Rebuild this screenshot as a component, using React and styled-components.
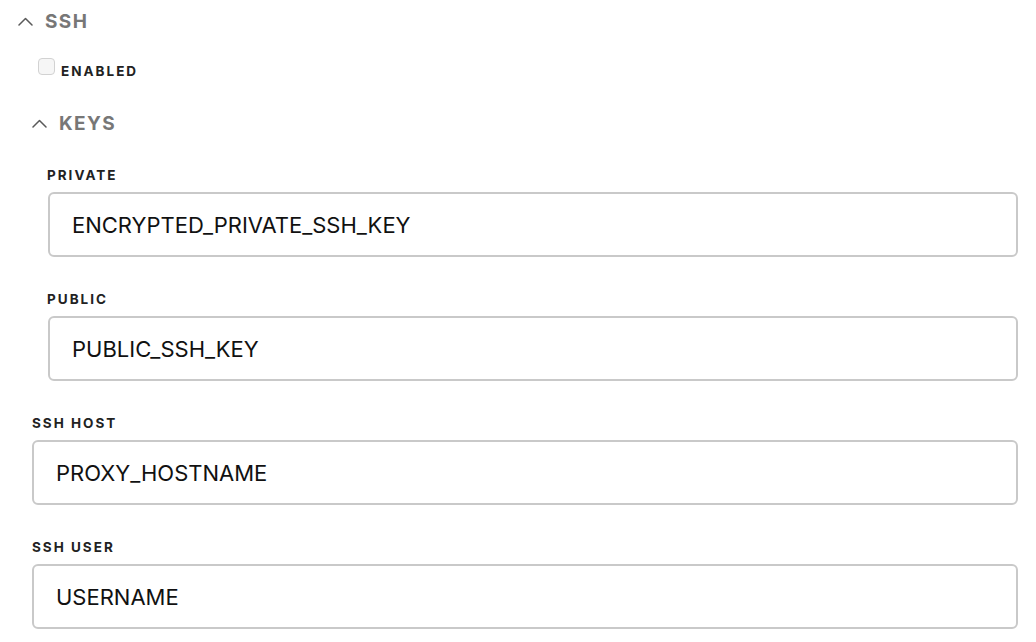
import styled, { createGlobalStyle } from "styled-components";

const GlobalStyle = createGlobalStyle`
  html, body {
    margin: 0;
    padding: 0;
    background: #ffffff;
    font-family: "Inter", "Liberation Sans", sans-serif;
  }
`;

const Page = styled.div`
  padding: 8px 18px 0 18px;
  width: 1036px;
  box-sizing: border-box;
`;

const SectionHeader = styled.div`
  display: flex;
  align-items: center;
  gap: 12px;
  height: 26px;
  margin-top: ${(p) => p.$top || 0}px;
  color: #777777;
  font-size: 19px;
  font-weight: 700;
  letter-spacing: 1.4px;
`;

const Chevron = () => (
  <svg width="15" height="9" viewBox="0 0 15 9" fill="none">
    <path d="M1 8 L7.5 1.5 L14 8" stroke="#5a5a5a" strokeWidth="1.5" strokeLinecap="round" strokeLinejoin="round" />
  </svg>
);

const SectionBody = styled.div`
  padding-left: ${(p) => p.$indent}px;
  display: flex;
  flex-direction: column;
`;

const CheckRow = styled.label`
  display: flex;
  align-items: flex-start;
  gap: 6px;
  margin: 24px 0 0 6px;
`;

const Box = styled.span`
  width: 17px;
  height: 17px;
  box-sizing: border-box;
  border: 1.5px solid #d2d2d2;
  border-radius: 4px;
  background: #f6f6f6;
`;

const SmallCaps = styled.span`
  font-size: 13.5px;
  line-height: 16px;
  font-weight: 700;
  letter-spacing: 2px;
  color: #222;
  padding-top: ${(p) => p.$pad || 0}px;
`;

const Field = styled.div`
  display: flex;
  flex-direction: column;
  margin-top: ${(p) => p.$top}px;
`;

const Label = styled(SmallCaps)`
  display: block;
  margin-bottom: 9px;
`;

const Input = styled.div`
  height: 65px;
  box-sizing: border-box;
  border: 2px solid #c9c9c9;
  border-radius: 6px;
  display: flex;
  align-items: center;
  padding-left: 22px;
  font-size: 22px;
  color: #111;
  margin-left: ${(p) => p.$shift || 0}px;
`;

function FormField({ label, value, top, shift }) {
  return (
    <Field $top={top}>
      <Label>{label}</Label>
      <Input $shift={shift}>{value}</Input>
    </Field>
  );
}

export default function App() {
  return (
    <>
      <GlobalStyle />
      <Page>
        <SectionHeader>
          <Chevron />
          <span>SSH</span>
        </SectionHeader>
        <SectionBody $indent={14}>
          <CheckRow>
            <Box />
            <SmallCaps $pad={5}>ENABLED</SmallCaps>
          </CheckRow>
          <SectionHeader $top={31}>
            <Chevron />
            <span>KEYS</span>
          </SectionHeader>
          <SectionBody $indent={15}>
            <FormField label="PRIVATE" value="ENCRYPTED_PRIVATE_SSH_KEY" top={31} shift={1} />
            <FormField label="PUBLIC" value="PUBLIC_SSH_KEY" top={34} shift={1} />
          </SectionBody>
          <FormField label="SSH HOST" value="PROXY_HOSTNAME" top={34} />
          <FormField label="SSH USER" value="USERNAME" top={34} />
        </SectionBody>
      </Page>
    </>
  );
}
